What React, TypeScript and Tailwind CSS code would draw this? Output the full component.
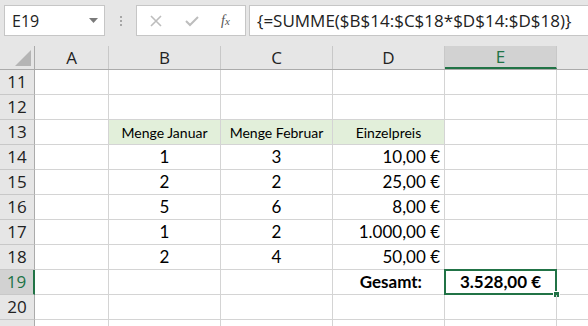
import React from "react";

const ui = { fontFamily: '"Open Sans", "Noto Sans", sans-serif' };
const cellFont = { fontFamily: 'Lato, "Open Sans", sans-serif' };

const columns = [
  { key: "A", w: "w-[74px]" },
  { key: "B", w: "w-[112px]" },
  { key: "C", w: "w-[112px]" },
  { key: "D", w: "w-[112px]" },
  { key: "E", w: "w-[112px]" },
];

type Cell = { text?: string; align?: "left" | "center" | "right"; bold?: boolean; fill?: boolean; small?: boolean; indent?: boolean };

const rows: { n: number; label?: boolean; cells: Record<string, Cell> }[] = [
  { n: 11, cells: {} },
  { n: 12, cells: {} },
  {
    n: 13,
    cells: {
      B: { text: "Menge Januar", align: "center", fill: true, small: true },
      C: { text: "Menge Februar", align: "center", fill: true, small: true },
      D: { text: "Einzelpreis", align: "center", fill: true, small: true },
    },
  },
  { n: 14, cells: { B: { text: "1", align: "center" }, C: { text: "3", align: "center" }, D: { text: "10,00 €", align: "right" } } },
  { n: 15, cells: { B: { text: "2", align: "center" }, C: { text: "2", align: "center" }, D: { text: "25,00 €", align: "right" } } },
  { n: 16, cells: { B: { text: "5", align: "center" }, C: { text: "6", align: "center" }, D: { text: "8,00 €", align: "right" } } },
  { n: 17, cells: { B: { text: "1", align: "center" }, C: { text: "2", align: "center" }, D: { text: "1.000,00 €", align: "right" } } },
  { n: 18, cells: { B: { text: "2", align: "center" }, C: { text: "4", align: "center" }, D: { text: "50,00 €", align: "right" } } },
  {
    n: 19,
    cells: {
      D: { text: "Gesamt:", align: "right", bold: true, indent: true },
      E: { text: "3.528,00 €", align: "center", bold: true },
    },
  },
  { n: 20, cells: {} },
  // row 21 only peeks in at the bottom edge, its number isn't visible
  { n: 21, label: false, cells: {} },
];

function FormulaBar() {
  return (
    <div className="h-[46px] bg-[#e6e6e6] flex items-start pt-[5px] pl-[4px]" style={ui}>
      {/* Name box */}
      <div className="w-[101px] h-[31px] bg-white border border-[#c6c6c6] flex items-center justify-between pl-[7px] pr-[6px] text-[16px] text-[#222]">
        <span>E19</span>
        <svg width="9" height="5" viewBox="0 0 9 5">
          <path d="M0 0 L9 0 L4.5 5 Z" fill="#7a7a7a" />
        </svg>
      </div>
      {/* grip dots */}
      <div className="w-[31px] h-[31px] flex flex-col items-center justify-center gap-[2px]">
        <div className="w-[2px] h-[2px] bg-[#a6a6a6]" />
        <div className="w-[2px] h-[2px] bg-[#a6a6a6]" />
        <div className="w-[2px] h-[2px] bg-[#a6a6a6]" />
      </div>
      {/* cancel / enter / fx */}
      <div className="w-[110px] h-[31px] bg-white border border-[#c6c6c6] flex items-center pl-[13px] pr-[8px]">
        <svg width="12" height="12" viewBox="0 0 12 12">
          <path d="M1 1 L11 11 M11 1 L1 11" stroke="#bdbdbd" strokeWidth="1.6" />
        </svg>
        <svg width="14" height="12" viewBox="0 0 14 12" className="ml-[23px]">
          <path d="M1 6 L5 10 L13 2" stroke="#bdbdbd" strokeWidth="2" fill="none" />
        </svg>
        <span
          className="ml-[22px] text-[14px] italic text-[#555] leading-none"
          style={{ fontFamily: '"Liberation Serif", serif' }}
        >
          f<span className="text-[11px]">x</span>
        </span>
      </div>
      {/* formula */}
      <div className="ml-[3px] flex-1 h-[31px] bg-white border border-[#c6c6c6] border-r-0 flex items-center pl-[7px] text-[17px] text-[#222] whitespace-nowrap overflow-hidden">
        {"{=SUMME($B$14:$C$18*$D$14:$D$18)}"}
      </div>
    </div>
  );
}

function HeaderRow() {
  return (
    <div className="flex h-[24px] bg-[#e6e6e6] border-b border-[#ababab]" style={ui}>
      <div className="w-[35px] shrink-0 border-r border-[#ababab] relative">
        <svg width="16" height="16" viewBox="0 0 16 16" className="absolute right-[3px] bottom-[3px]">
          <path d="M16 0 L16 16 L0 16 Z" fill="#b5b5b5" />
        </svg>
      </div>
      {columns.map((c) => {
        const sel = c.key === "E";
        return (
          <div
            key={c.key}
            className={`${c.w} shrink-0 border-r border-[#c8c8c8] flex items-center justify-center text-[17px] ${
              sel ? "bg-[#d2d2d2] text-[#217346] border-b-2 border-b-[#217346]" : "text-[#222]"
            }`}
          >
            {c.key}
          </div>
        );
      })}
      <div className="flex-1" />
    </div>
  );
}

export default function App() {
  return (
    <div className="w-[588px] h-[326px] overflow-hidden bg-white">
      <FormulaBar />
      <HeaderRow />
      {rows.map((r) => {
        const selRow = r.n === 19;
        return (
          <div key={r.n} className="flex h-[25px]">
            <div
              className={`w-[35px] shrink-0 flex items-center justify-center border-b border-[#c8c8c8] text-[17px] ${
                selRow
                  ? "bg-[#d2d2d2] text-[#217346] border-r-2 border-r-[#217346]"
                  : "bg-[#e6e6e6] text-[#222] border-r border-r-[#ababab]"
              }`}
              style={ui}
            >
              {r.label === false ? null : r.n}
            </div>
            {columns.map((c) => {
              const cell = r.cells[c.key] || {};
              const selected = selRow && c.key === "E";
              const justify =
                cell.align === "center"
                  ? "justify-center"
                  : cell.align === "right"
                  ? cell.indent
                    ? "justify-end pr-[22px]"
                    : "justify-end pr-[4px]"
                  : "justify-start pl-[4px]";
              return (
                <div
                  key={c.key}
                  className={`${c.w} shrink-0 relative border-r border-b border-[#d4d4d4] flex items-center text-black ${justify} ${
                    cell.fill ? "bg-[#e2efda]" : ""
                  } ${cell.small ? "text-[14px]" : "text-[17px]"} ${cell.bold ? "font-bold" : ""}`}
                  style={cellFont}
                >
                  {cell.text}
                  {selected && (
                    <>
                      <div className="absolute left-[-1px] top-[-1px] right-[-1px] bottom-[-1px] border-2 border-[#217346] pointer-events-none" />
                      <div className="absolute right-[-4px] bottom-[-4px] w-[7px] h-[7px] bg-[#217346] border border-white" />
                    </>
                  )}
                </div>
              );
            })}
            <div className="flex-1 border-b border-[#d4d4d4]" />
          </div>
        );
      })}
    </div>
  );
}
